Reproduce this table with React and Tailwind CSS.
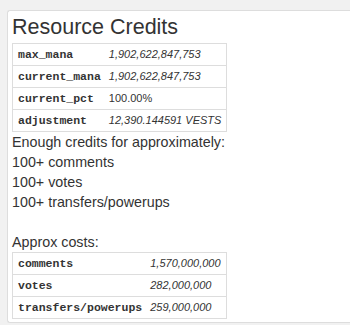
import React from 'react';

const credits = [
  { key: 'max_mana', value: '1,902,622,847,753', italic: true },
  { key: 'current_mana', value: '1,902,622,847,753', italic: true },
  { key: 'current_pct', value: '100.00%', italic: false },
  { key: 'adjustment', value: '12,390.144591 VESTS', italic: true },
];

const costs = [
  { key: 'comments', value: '1,570,000,000' },
  { key: 'votes', value: '282,000,000' },
  { key: 'transfers/powerups', value: '259,000,000' },
];

const KeyValueTable = ({ rows }) => (
  <table className="border-collapse border border-[#ddd]">
    <tbody>
      {rows.map((row) => (
        <tr key={row.key} className="h-[22px] border-t border-[#ddd]">
          <td className="pl-[5px] pr-[4px] font-['Liberation_Mono',monospace] font-bold text-[11.5px] leading-[21px]">
            {row.key}
          </td>
          <td className={`pl-[4px] pr-[5px] text-left text-[11px] leading-[21px] ${row.italic === false ? '' : 'italic'}`}>
            {row.value}
          </td>
        </tr>
      ))}
    </tbody>
  </table>
);

export default function App() {
  return (
    <div className="min-h-[325px] bg-[#f1f1f1] pt-[10px] pl-[7px] pb-[3px] font-['Liberation_Sans',Arial,sans-serif] text-[#333]">
      <div className="bg-white border border-[#ddd] border-r-0 rounded-l-[3px] pl-[4px] pb-[3px]">
        <h1 className="text-[21.5px] leading-[32px] font-normal">Resource Credits</h1>
        <KeyValueTable rows={credits} />
        <div className="text-[14.3px] leading-[20px]">
          <p>Enough credits for approximately:</p>
          <p>100+ comments</p>
          <p>100+ votes</p>
          <p>100+ transfers/powerups</p>
          <p>&nbsp;</p>
          <p>Approx costs:</p>
        </div>
        <KeyValueTable rows={costs} />
      </div>
    </div>
  );
}
